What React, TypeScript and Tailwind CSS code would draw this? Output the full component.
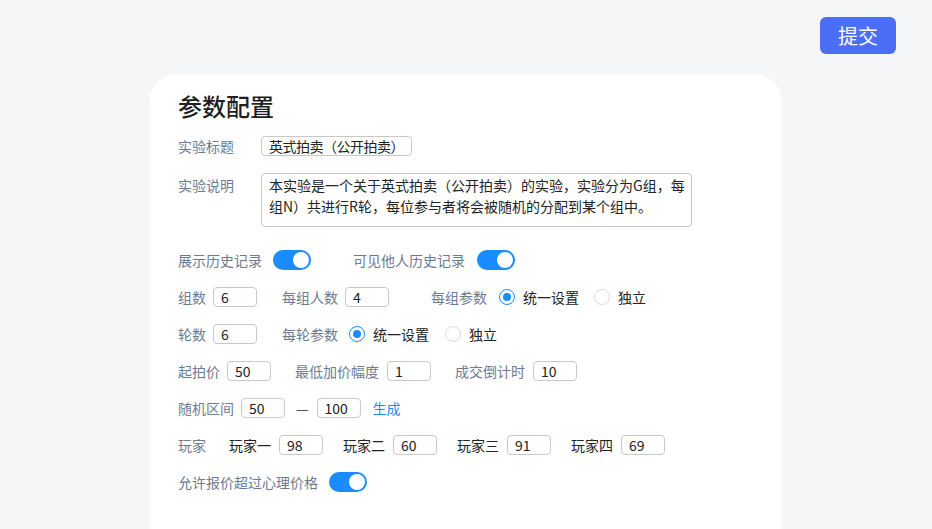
import React from "react";

const FONT = { fontFamily: '"Noto Sans CJK SC", "Noto Sans", sans-serif' };

function Label({ children, className = "" }: { children: React.ReactNode; className?: string }) {
  return <span className={`text-[14px] leading-5 text-[#6e7a8f] whitespace-nowrap ${className}`}>{children}</span>;
}

function Input({ value, className = "" }: { value: string; className?: string }) {
  return (
    <div
      className={`flex h-5 w-[44px] items-center rounded-[4px] border border-[#c8c8c8] bg-white px-[7px] text-[14px] leading-5 text-[#222] ${className}`}
    >
      {value}
    </div>
  );
}

function Toggle({ className = "" }: { className?: string }) {
  return (
    <div className={`flex h-5 w-[38px] items-center justify-end rounded-full bg-[#1b8cff] pr-[2px] ${className}`}>
      <div className="h-4 w-4 rounded-full bg-white" />
    </div>
  );
}

function Radio({ checked, label, className = "" }: { checked?: boolean; label: string; className?: string }) {
  return (
    <div className={`flex items-center ${className}`}>
      <div
        className={`flex h-4 w-4 items-center justify-center rounded-full border ${
          checked ? "border-[#1b8cff]" : "border-[#d9d9d9]"
        } bg-white`}
      >
        {checked && <div className="h-2 w-2 rounded-full bg-[#1b8cff]" />}
      </div>
      <span className="ml-[8px] text-[14px] leading-5 text-[#222]">{label}</span>
    </div>
  );
}

export default function App() {
  return (
    <div className="min-h-[529px] w-full overflow-hidden bg-[#f5f6f8]" style={FONT}>
      <div className="flex justify-end pr-[36px] pt-[17px]">
        <button className="h-[37px] w-[76px] rounded-[6px] bg-[#4c6ef7] text-[20px] text-white">提交</button>
      </div>
      <div className="ml-[150px] mt-[20px] min-h-[460px] w-[631px] rounded-t-[26px] bg-white pl-[28px] pt-[16px]">
        <h1 className="text-[24px] font-medium leading-8 text-[#1f1f1f]">参数配置</h1>
        <div className="mt-[14px] flex flex-col gap-[17px]">
          <div className="flex items-center">
            <Label className="w-[83px]">实验标题</Label>
            <div className="flex h-5 items-center whitespace-nowrap rounded-[4px] border border-[#c8c8c8] px-[7px] text-[14px] leading-5 tracking-[-0.5px] text-[#222]">
              英式拍卖（公开拍卖）
            </div>
          </div>
          <div className="flex items-start">
            <Label className="mt-[2px] w-[83px]">实验说明</Label>
            <div className="h-[54px] w-[431px] overflow-hidden whitespace-nowrap rounded-[4px] border border-[#c8c8c8] px-[7px] pt-[1px] text-[14px] leading-[21px] text-[#222]">
              <div>本实验是一个关于英式拍卖（公开拍卖）的实验，实验分为G组，每</div>
              <div>组N）共进行R轮，每位参与者将会被随机的分配到某个组中。</div>
            </div>
          </div>
          <div className="mt-[6px] flex items-center">
            <Label>展示历史记录</Label>
            <Toggle className="ml-[11px]" />
            <Label className="ml-[42px]">可见他人历史记录</Label>
            <Toggle className="ml-[12px]" />
          </div>
          <div className="flex items-center">
            <Label>组数</Label>
            <Input value="6" className="ml-[7px]" />
            <Label className="ml-[25px]">每组人数</Label>
            <Input value="4" className="ml-[7px]" />
            <Label className="ml-[42px]">每组参数</Label>
            <Radio checked label="统一设置" className="ml-[12px]" />
            <Radio label="独立" className="ml-[15px]" />
          </div>
          <div className="flex items-center">
            <Label>轮数</Label>
            <Input value="6" className="ml-[7px]" />
            <Label className="ml-[25px]">每轮参数</Label>
            <Radio checked label="统一设置" className="ml-[11px]" />
            <Radio label="独立" className="ml-[16px]" />
          </div>
          <div className="flex items-center">
            <Label>起拍价</Label>
            <Input value="50" className="ml-[7px]" />
            <Label className="ml-[24px]">最低加价幅度</Label>
            <Input value="1" className="ml-[8px]" />
            <Label className="ml-[24px]">成交倒计时</Label>
            <Input value="10" className="ml-[8px]" />
          </div>
          <div className="flex items-center">
            <Label>随机区间</Label>
            <Input value="50" className="ml-[7px]" />
            <span className="ml-[11px] text-[14px] leading-5 text-[#555]">—</span>
            <Input value="100" className="ml-[8px]" />
            <span className="ml-[12px] text-[14px] leading-5 text-[#1b8cff]">生成</span>
          </div>
          <div className="flex items-center">
            <Label>玩家</Label>
            <span className="ml-[23px] text-[14px] leading-5 text-[#222]">玩家一</span>
            <Input value="98" className="ml-[8px]" />
            <span className="ml-[20px] text-[14px] leading-5 text-[#222]">玩家二</span>
            <Input value="60" className="ml-[8px]" />
            <span className="ml-[20px] text-[14px] leading-5 text-[#222]">玩家三</span>
            <Input value="91" className="ml-[8px]" />
            <span className="ml-[20px] text-[14px] leading-5 text-[#222]">玩家四</span>
            <Input value="69" className="ml-[8px]" />
          </div>
          <div className="flex items-center">
            <Label>允许报价超过心理价格</Label>
            <Toggle className="ml-[11px]" />
          </div>
        </div>
      </div>
    </div>
  );
}
